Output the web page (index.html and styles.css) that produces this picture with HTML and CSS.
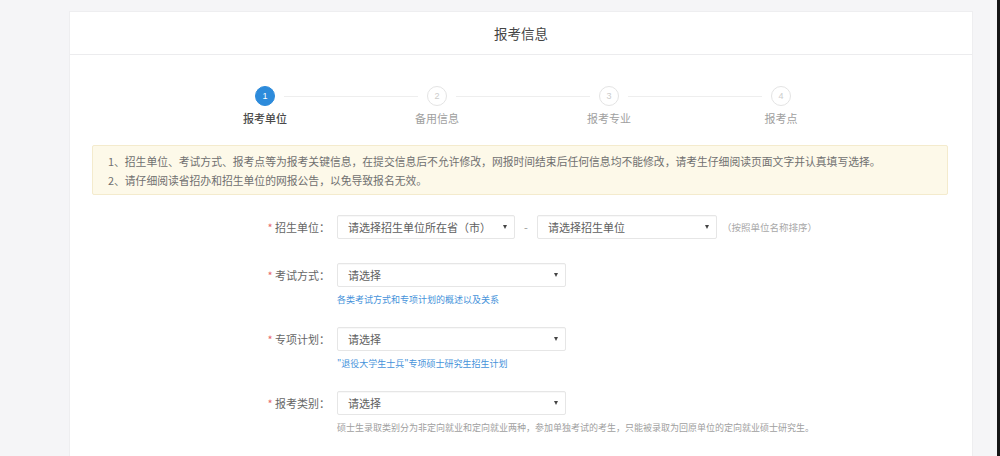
FILE: index.html
```html
<!DOCTYPE html>
<html lang="zh-CN">
<head>
<meta charset="utf-8">
<title>报考信息</title>
<link rel="stylesheet" href="styles.css">
</head>
<body>
<div class="screen">
  <div class="page">
    <div class="card">
      <div class="card-head">报考信息</div>
      <div class="card-body">
        <div class="steps">
          <div class="step active">
            <div class="track"><span class="seg blank"></span><span class="dot">1</span><span class="seg"></span></div>
            <div class="step-label">报考单位</div>
          </div>
          <div class="step">
            <div class="track"><span class="seg"></span><span class="dot">2</span><span class="seg"></span></div>
            <div class="step-label">备用信息</div>
          </div>
          <div class="step">
            <div class="track"><span class="seg"></span><span class="dot">3</span><span class="seg"></span></div>
            <div class="step-label">报考专业</div>
          </div>
          <div class="step">
            <div class="track"><span class="seg"></span><span class="dot">4</span><span class="seg blank"></span></div>
            <div class="step-label">报考点</div>
          </div>
        </div>

        <div class="notice">
          <p>1、招生单位、考试方式、报考点等为报考关键信息，在提交信息后不允许修改，网报时间结束后任何信息均不能修改，请考生仔细阅读页面文字并认真填写选择。</p>
          <p>2、请仔细阅读省招办和招生单位的网报公告，以免导致报名无效。</p>
        </div>

        <div class="form">
          <div class="row row-first">
            <div class="line">
              <label class="label"><span class="star">*</span> 招生单位：</label>
              <div class="select w178"><span>请选择招生单位所在省（市）</span><i class="caret"></i></div>
              <span class="dash">-</span>
              <div class="select w180"><span>请选择招生单位</span><i class="caret"></i></div>
              <span class="hint">（按照单位名称排序）</span>
            </div>
          </div>
          <div class="row">
            <div class="line">
              <label class="label"><span class="star">*</span> 考试方式：</label>
              <div class="select w229"><span>请选择</span><i class="caret"></i></div>
            </div>
            <div class="help link">各类考试方式和专项计划的概述以及关系</div>
          </div>
          <div class="row">
            <div class="line">
              <label class="label"><span class="star">*</span> 专项计划：</label>
              <div class="select w229"><span>请选择</span><i class="caret"></i></div>
            </div>
            <div class="help link">"退役大学生士兵"专项硕士研究生招生计划</div>
          </div>
          <div class="row">
            <div class="line">
              <label class="label"><span class="star">*</span> 报考类别：</label>
              <div class="select w229"><span>请选择</span><i class="caret"></i></div>
            </div>
            <div class="help">硕士生录取类别分为非定向就业和定向就业两种，参加单独考试的考生，只能被录取为回原单位的定向就业硕士研究生。</div>
          </div>
        </div>
      </div>
    </div>
  </div>
  <div class="edge"></div>
</div>
</body>
</html>
```

FILE: styles.css
```css
html, body {
  margin: 0;
  padding: 0;
  height: 100%;
}
body {
  font-family: "Noto Sans CJK SC", "Noto Sans", "Liberation Sans", sans-serif;
  color: #555;
  background: #f5f5f7;
  overflow: hidden;
}
.screen {
  display: flex;
  height: 456px;
}
.page {
  flex: 1;
  padding: 12px 0 0 70px;
  background: #f5f5f7;
  overflow: hidden;
}
.edge {
  width: 3px;
  background: #161616;
}
.card {
  width: 902px;
  background: #fff;
  box-shadow: 0 0 0 1px #eeeef0;
  height: 460px;
}
.card-head {
  height: 42px;
  line-height: 42px;
  text-align: center;
  font-size: 13.5px;
  color: #444;
  border-bottom: 1px solid #ececee;
}
.card-body {
  padding: 0 24px 0 22px;
}

/* steps */
.steps {
  display: flex;
  justify-content: center;
  padding: 31px 0 0 6px;
}
.step {
  width: 172px;
  display: flex;
  flex-direction: column;
  align-items: center;
}
.track {
  display: flex;
  align-items: center;
  width: 100%;
  height: 20px;
}
.seg {
  flex: 1;
  height: 1px;
  background: #eeeeee;
}
.seg:first-child { margin-right: 9px; }
.seg:last-child { margin-left: 9px; }
.seg.blank { background: transparent; }
.dot {
  width: 18px;
  height: 18px;
  border-radius: 50%;
  border: 1px solid #e4e4e4;
  font-size: 9px;
  line-height: 18px;
  text-align: center;
  color: #cccccc;
  background: #fff;
  font-family: "Liberation Sans", sans-serif;
}
.step.active .dot {
  background: #2d8bdb;
  border-color: #2d8bdb;
  color: #fff;
}
.step-label {
  margin-top: 4px;
  font-size: 11px;
  line-height: 16px;
  color: #a0a0a0;
}
.step.active .step-label {
  color: #4a4a4a;
  font-weight: 500;
}

/* notice */
.notice {
  margin-top: 19px;
  padding: 6px 15px 4px;
  background: #fdf9e9;
  border: 1px solid #f4ebcd;
  border-radius: 2px;
}
.notice p {
  margin: 0;
  font-size: 10.8px;
  line-height: 19px;
  color: #707070;
  white-space: nowrap;
}

/* form */
.form {
  padding-top: 20px;
}
.row {
  margin-bottom: 20px;
}
.row-first {
  margin-bottom: 24px;
}
.line {
  display: flex;
  align-items: center;
  height: 24px;
}
.label {
  width: 245px;
  box-sizing: border-box;
  padding-right: 7px;
  text-align: right;
  font-size: 11px;
  color: #666;
}
.star {
  color: #e86a6a;
}
.select {
  box-sizing: border-box;
  height: 24px;
  border: 1px solid #e6e6e6;
  border-radius: 2px;
  box-shadow: inset 0 1px 1px rgba(0,0,0,0.03);
  display: flex;
  align-items: center;
  justify-content: space-between;
  padding: 0 7px 0 10px;
  font-size: 11px;
  color: #606060;
  background: #fff;
  white-space: nowrap;
}
.w178 { width: 178px; }
.w180 { width: 180px; }
.w229 { width: 229px; }
.caret {
  width: 0;
  height: 0;
  border-left: 2.5px solid transparent;
  border-right: 2.5px solid transparent;
  border-top: 4px solid #444;
}
.dash {
  width: 22px;
  text-align: center;
  font-size: 11px;
  color: #999;
}
.hint {
  margin-left: 5px;
  font-size: 9.5px;
  color: #a8a8a8;
}
.help {
  margin: 6px 0 0 245px;
  font-size: 9px;
  line-height: 14px;
  color: #a0a0a0;
  white-space: nowrap;
}
.help.link {
  color: #4592da;
}
```
